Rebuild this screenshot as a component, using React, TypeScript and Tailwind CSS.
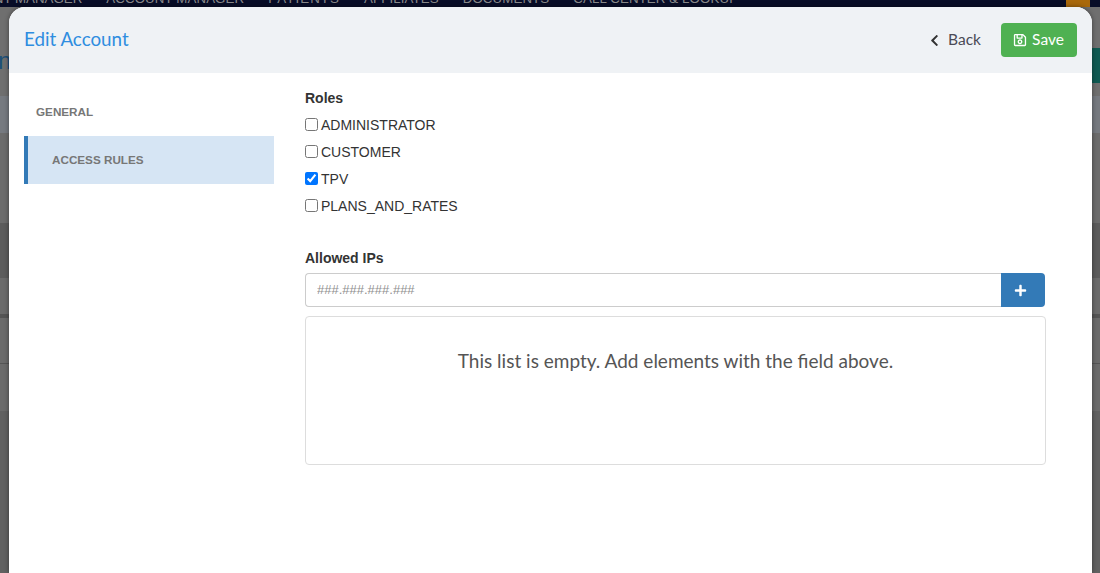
import { FaChevronLeft, FaPlus, FaRegSave } from 'react-icons/fa';

const navItems = ['ACCOUNT MANAGER', 'PATIENTS', 'AFFILIATES', 'DOCUMENTS', 'CALL CENTER & LOOKUP'];
const roles = [
  { name: 'ADMINISTRATOR', checked: false },
  { name: 'CUSTOMER', checked: false },
  { name: 'TPV', checked: true },
  { name: 'PLANS_AND_RATES', checked: false },
];

const headingFont = "font-['Lato','Open_Sans',sans-serif]";

function Backdrop() {
  return (
    <div className="h-full bg-[#6b6b6b]">
      <div className="flex h-[7px] justify-between overflow-hidden bg-[#080d27]">
        <div className="-mt-[9px] flex gap-6 whitespace-nowrap text-[13.3px] leading-[16px] text-[#8a8a8a]">
          <span className="-ml-[15px]">ENT MANAGER</span>
          {navItems.map((item) => (
            <span key={item} className="tracking-[0.1px] first:tracking-normal [&:nth-child(3)]:tracking-[1.1px]">
              {item}
            </span>
          ))}
        </div>
        <div className="mr-[10px] w-[24px] bg-[#a9690c]" />
      </div>
      <div className="flex h-[566px] flex-col">
        <div className="h-[89px] bg-[#6f6f6f]">
          <div className="flex h-[41px] justify-between" />
          <div className="flex h-[35px] items-center justify-between">
            <span className="-ml-[2px] -mt-[10px] text-[24px] leading-[24px] text-[#1d4f78]">n</span>
            <div className="h-full w-[8px] bg-[#0f5a52]" />
          </div>
        </div>
        <div className="h-[37px] bg-[#767a80]" />
        <div className="h-[90px] bg-[#6c6c6c]" />
        <div className="h-[55px] bg-[#5c5c5c]" />
        <div className="h-[36px] bg-[#6b6b6b]" />
        <div className="h-[4px] bg-[#555]" />
        <div className="h-[46px] border-b border-[#555] bg-[#6b6b6b]" />
        <div className="h-[47px] bg-[#6b6b6b]" />
        <div className="flex-1 bg-[#616161]" />
      </div>
    </div>
  );
}

function RoleRow({ name, checked }: { name: string; checked: boolean }) {
  return (
    <label className="flex h-[27px] items-center text-[14px] text-[#333]">
      <input type="checkbox" defaultChecked={checked} className="m-0 mr-[3px] -mt-[2px] h-[13px] w-[13px] accent-[#0075ff]" />
      {name}
    </label>
  );
}

export default function App() {
  return (
    <div className="relative h-[573px] w-[1100px] overflow-hidden font-['Liberation_Sans',Arial,sans-serif]">
      <Backdrop />
      <div className="absolute right-[8px] top-[7px] h-[566px] w-[1083px] overflow-hidden rounded-t-[16px] bg-white shadow-[0_0_5px_rgba(0,0,0,0.45)]">
        <header className="flex h-[66px] items-center justify-between bg-[#eff2f5] px-[15px]">
          <h1 className={`${headingFont} -mt-[2px] text-[18.8px] text-[#2e8de0]`}>Edit Account</h1>
          <div className={`${headingFont} flex items-center text-[15.5px]`}>
            <button className="mr-[20px] flex items-center text-[#4a4a55]">
              <FaChevronLeft size={13} className="mr-[7px] text-[#333]" />
              Back
            </button>
            <button className="flex h-[34px] w-[76px] items-center justify-center gap-[5px] rounded-[4px] bg-[#4fb152] pr-[1px] text-white">
              <FaRegSave size={14} />
              Save
            </button>
          </div>
        </header>

        <div className="flex pl-[15px]">
          <nav className="w-[250px] pt-[15px] text-[11.7px] font-bold text-[#777]">
            <div className="flex h-[48px] items-center pl-[12px]">GENERAL</div>
            <div className="flex h-[48px] items-center border-l-4 border-[#337ab7] bg-[#d6e5f4] pl-[24px]">ACCESS RULES</div>
          </nav>

          <section className="ml-[31px] w-[741px] pt-[17px]">
            <h2 className="h-[22px] text-[14px] font-bold leading-[16px] text-[#333]">Roles</h2>
            <div>
              {roles.map((role) => (
                <RoleRow key={role.name} name={role.name} checked={role.checked} />
              ))}
            </div>
            <h2 className="mt-[30px] h-[23px] text-[14px] font-bold leading-[16px] text-[#333]">Allowed IPs</h2>
            <div className="mr-[1px] flex h-[34px]">
              <input
                placeholder="###.###.###.###"
                className="min-w-0 flex-1 rounded-l-[4px] border border-r-0 border-[#ccc] px-[11px] text-[13px] placeholder:text-[#8f8f8f]"
              />
              <button className="flex w-[44px] items-center justify-center rounded-r-[4px] bg-[#337ab7] pr-[6px] text-white">
                <FaPlus size={13} />
              </button>
            </div>
            <div className={`${headingFont} mt-[9px] h-[149px] rounded-[4px] border border-[#ddd] pt-[30px] text-center text-[19px] text-[#555]`}>
              This list is empty. Add elements with the field above.
            </div>
          </section>
        </div>
      </div>
    </div>
  );
}
